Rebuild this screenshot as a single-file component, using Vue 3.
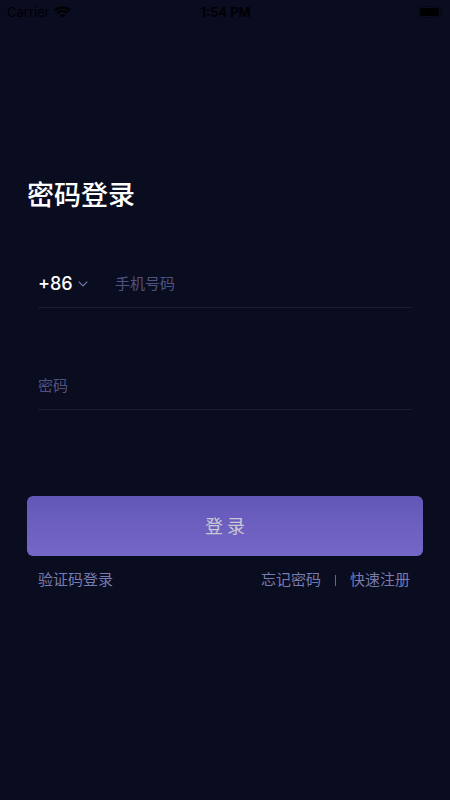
<script setup>
import { ref } from 'vue'

const country = ref('+86')
const phone = ref('')
const password = ref('')
</script>

<template>
  <div class="screen">
    <header class="status">
      <div class="carrier">
        <span>Carrier</span>
        <svg width="17" height="12" viewBox="0 0 17 12" aria-hidden="true">
          <path d="M1 4.3C5.2 .3 11.8 .3 16 4.3M3.6 7C6.4 4.5 10.6 4.5 13.4 7" fill="none" stroke="#000" stroke-width="2.3" />
          <path d="M5.9 9.2C7.4 7.9 9.6 7.9 11.1 9.2L8.5 11.8Z" fill="#000" />
        </svg>
      </div>
      <time>1:54 PM</time>
      <svg class="battery" width="26" height="12" viewBox="0 0 26 12" aria-hidden="true">
        <rect x=".5" y=".5" width="22" height="11" rx="3" fill="none" stroke="#000" stroke-opacity=".35" />
        <rect x="2" y="2" width="19" height="8" rx="1.5" fill="#000" />
        <path d="M24 4v4c1.6-.6 1.6-3.4 0-4" fill="#000" fill-opacity=".4" />
      </svg>
    </header>

    <form class="login" @submit.prevent>
      <h1>密码登录</h1>
      <div class="field">
        <label class="country">
          <select v-model="country" aria-label="国家代码">
            <option>+86</option>
          </select>
          <svg width="10" height="6" viewBox="0 0 10 6" aria-hidden="true">
            <path d="M.7 .7L5 5L9.3 .7" fill="none" stroke="#7679a4" stroke-width="1.2" />
          </svg>
        </label>
        <input v-model="phone" type="tel" placeholder="手机号码" aria-label="手机号码" />
      </div>
      <div class="field second">
        <input v-model="password" type="password" placeholder="密码" aria-label="密码" />
      </div>
      <button type="submit">登 录</button>
      <nav class="links">
        <a href="#code">验证码登录</a>
        <a class="forgot" href="#forgot">忘记密码</a>
        <i class="divider"></i>
        <a href="#register">快速注册</a>
      </nav>
    </form>
  </div>
</template>

<style>
body {
  margin: 0;
  background: #0a0c20;
}
</style>

<style scoped>
.screen {
  min-height: 100vh;
  background: #0a0c20;
  color: #fff;
  font-family: Inter, "Noto Sans CJK SC", sans-serif;
}
.status {
  display: grid;
  grid-template-columns: 1fr auto 1fr;
  align-items: center;
  height: 23px;
  padding: 0 6px 0 7px;
  color: #000;
  font-size: 13px;
}
.carrier {
  display: flex;
  align-items: center;
  gap: 4px;
}
time {
  font-weight: 600;
}
.battery {
  justify-self: end;
}
.login {
  padding: 151px 27px 0;
}
h1 {
  margin: 0;
  font-size: 27px;
  line-height: 44px;
  font-weight: 500;
}
.field {
  display: flex;
  align-items: center;
  height: 47px;
  margin: 42px 11px 0;
  border-bottom: 1px solid #1a1b36;
}
.second {
  margin-top: 54px;
}
.country {
  display: flex;
  align-items: center;
  gap: 5px;
  width: 77px;
}
select {
  appearance: none;
  width: 35px;
  padding: 0;
  border: 0;
  background: transparent;
  color: #fff;
  font: 500 18px/28px Inter, sans-serif;
}
input {
  flex: 1;
  min-width: 0;
  height: 40px;
  padding: 0 0 2px;
  border: 0;
  outline: 0;
  background: transparent;
  color: #fff;
  font: 15px "Noto Sans CJK SC", sans-serif;
}
input::placeholder {
  color: #505380;
  opacity: 1;
}
button {
  display: block;
  width: 100%;
  height: 60px;
  margin-top: 86px;
  padding: 0 0 2px;
  border: 0;
  border-radius: 6px;
  background: linear-gradient(#6257b7, #7567c7);
  color: #c8c8d2;
  font: 18px "Noto Sans CJK SC", sans-serif;
}
.links {
  display: flex;
  align-items: center;
  margin: 12px 13px 0 11px;
  font-size: 15px;
  line-height: 24px;
}
a {
  color: #767bb0;
  text-decoration: none;
}
.forgot {
  margin-left: auto;
}
.divider {
  width: 1px;
  height: 11px;
  margin: 0 14px;
  background: #62679a;
}
</style>
